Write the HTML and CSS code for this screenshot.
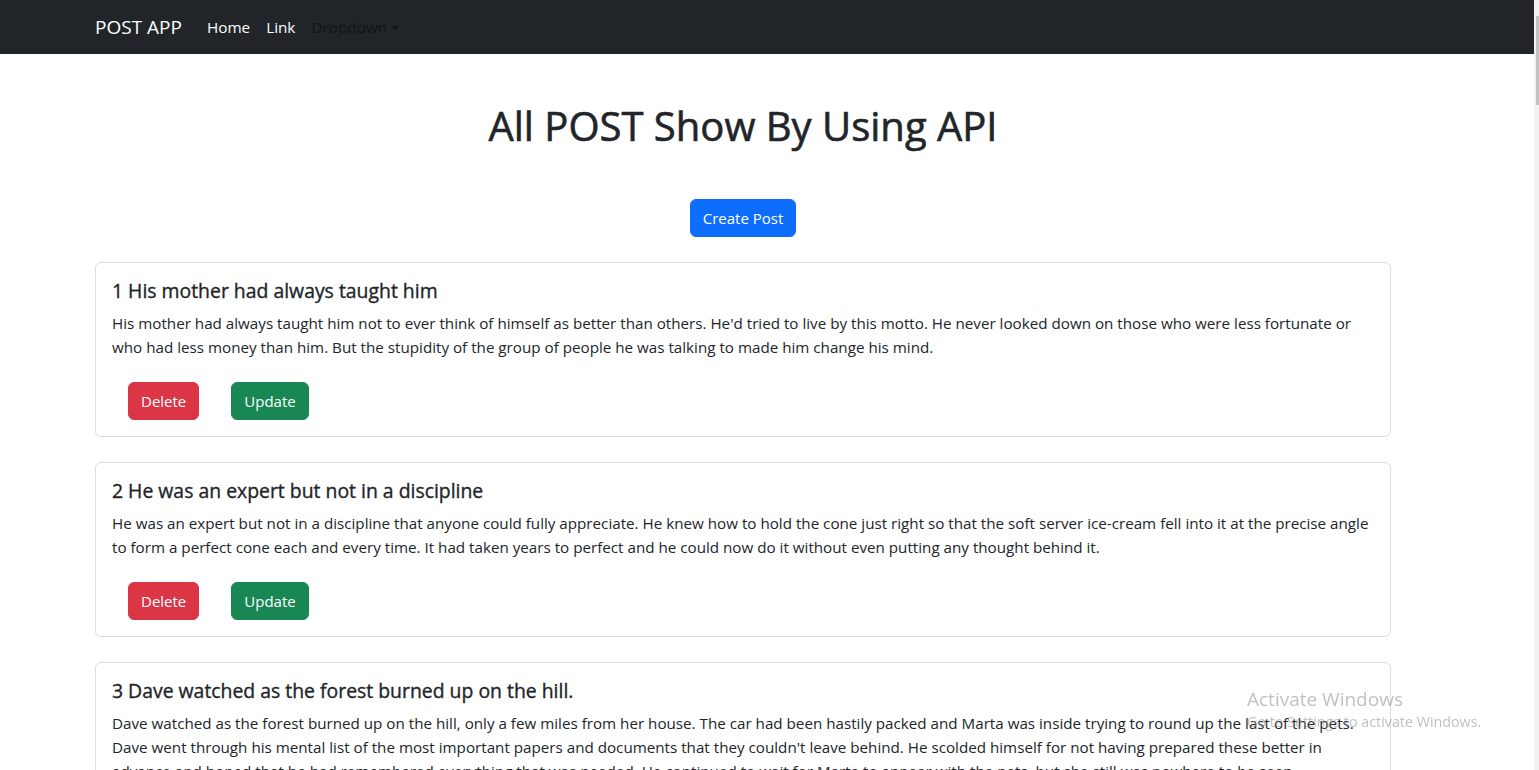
FILE: index.html
```html
<!DOCTYPE html>
<html lang="en">
<head>
<meta charset="utf-8">
<title>POST APP</title>
<link rel="stylesheet" href="styles.css">
</head>
<body>
<div class="page">
  <nav class="navbar">
    <div class="container nav-inner">
      <a class="brand" href="#">POST APP</a>
      <ul class="nav-links">
        <li><a class="nav-link active" href="#">Home</a></li>
        <li><a class="nav-link" href="#">Link</a></li>
        <li><a class="nav-link dropdown" href="#">Dropdown<span class="caret"></span></a></li>
      </ul>
    </div>
  </nav>

  <main class="container">
    <h1 class="page-title">All POST Show By Using API</h1>
    <div class="create-row">
      <button class="btn btn-primary">Create Post</button>
    </div>

    <div class="post-list">
      <div class="card">
        <h5 class="card-title">1 His mother had always taught him</h5>
        <p class="card-text">His mother had always taught him not to ever think of himself as better than others. He'd tried to live by this motto. He never looked down on those who were less fortunate or who had less money than him. But the stupidity of the group of people he was talking to made him change his mind.</p>
        <div class="actions">
          <button class="btn btn-danger">Delete</button>
          <button class="btn btn-success">Update</button>
        </div>
      </div>

      <div class="card">
        <h5 class="card-title">2 He was an expert but not in a discipline</h5>
        <p class="card-text">He was an expert but not in a discipline that anyone could fully appreciate. He knew how to hold the cone just right so that the soft server ice-cream fell into it at the precise angle to form a perfect cone each and every time. It had taken years to perfect and he could now do it without even putting any thought behind it.</p>
        <div class="actions">
          <button class="btn btn-danger">Delete</button>
          <button class="btn btn-success">Update</button>
        </div>
      </div>

      <div class="card">
        <h5 class="card-title">3 Dave watched as the forest burned up on the hill.</h5>
        <p class="card-text">Dave watched as the forest burned up on the hill, only a few miles from her house. The car had been hastily packed and Marta was inside trying to round up the last of the pets. Dave went through his mental list of the most important papers and documents that they couldn't leave behind. He scolded himself for not having prepared these better in advance and hoped that he had remembered everything that was needed. He continued to wait for Marta to appear with the pets, but she still was nowhere to be seen.</p>
        <div class="actions">
          <button class="btn btn-danger">Delete</button>
          <button class="btn btn-success">Update</button>
        </div>
      </div>
    </div>
  </main>
</div>

<div class="watermark">
  <div class="wm-title">Activate Windows</div>
  <div class="wm-sub">Go to Settings to activate Windows.</div>
</div>

<div class="scrollbar"><div class="scroll-thumb"></div></div>
</body>
</html>
```

FILE: styles.css
```css
html, body {
  margin: 0;
  padding: 0;
  overflow: hidden;
  background: #ffffff;
}

body {
  font-family: "Open Sans", "Noto Sans", "Liberation Sans", sans-serif;
  font-size: 15.2px;
  line-height: 24px;
  color: #212529;
}

.page {
  width: 1534px;
}

.container {
  width: 1296px;
  margin-left: 83px;
  padding: 0 12px;
}

/* Navbar */
.navbar {
  background: #212529;
  height: 54px;
}

.nav-inner {
  display: flex;
  align-items: center;
  height: 54px;
}

.brand {
  font-size: 19px;
  color: #ffffff;
  text-decoration: none;
  margin-right: 17px;
  line-height: 30px;
}

.nav-links {
  display: flex;
  list-style: none;
  margin: 0;
  padding: 0;
}

.nav-link {
  display: block;
  padding: 8px 8px;
  color: #ffffff;
  text-decoration: none;
  font-size: 15.3px;
}

.nav-link.dropdown {
  color: #121417;
}

.caret {
  display: inline-block;
  margin-left: 4px;
  vertical-align: 3px;
  border-top: 4.5px solid #121417;
  border-left: 4.5px solid transparent;
  border-right: 4.5px solid transparent;
}

/* Heading */
.page-title {
  margin: 48px 0 0;
  font-size: 40px;
  font-weight: 500;
  line-height: 48px;
  text-align: center;
  -webkit-text-stroke: 0.6px #212529;
}

.create-row {
  display: flex;
  justify-content: center;
  margin-top: 49px;
}

/* Buttons */
.btn {
  font-family: inherit;
  font-size: 15px;
  line-height: 24px;
  padding: 6px 12px;
  border: 1px solid transparent;
  border-radius: 6px;
  color: #ffffff;
  cursor: pointer;
}

.btn-primary {
  background: #0d6efd;
  border-color: #0d6efd;
}

.btn-danger {
  background: #dc3545;
  border-color: #dc3545;
}

.btn-success {
  background: #198754;
  border-color: #198754;
}

/* Posts */
.post-list {
  display: flex;
  flex-direction: column;
  gap: 25px;
  margin-top: 25px;
}

.card {
  border: 1px solid #dcdcdc;
  border-radius: 6px;
  padding: 16px;
}

.card-title {
  margin: 0 0 8px;
  font-size: 19.4px;
  font-weight: 500;
  line-height: 24px;
  -webkit-text-stroke: 0.35px #212529;
}

.card-text {
  margin: 0 0 16px;
}

.actions {
  display: flex;
  gap: 32px;
  padding: 7px 16px 0;
}

/* Overlays */
.watermark {
  position: fixed;
  left: 1247px;
  top: 686px;
  color: rgba(140, 140, 140, 0.55);
  font-family: "Open Sans", "Noto Sans", sans-serif;
}

.wm-title {
  font-size: 19px;
  line-height: 26px;
}

.wm-sub {
  font-size: 14.3px;
  line-height: 20px;
}

.scrollbar {
  position: fixed;
  top: 0;
  right: 0;
  width: 5px;
  height: 100%;
  background: #f1f1f1;
}

.scroll-thumb {
  margin: 16px 0 0 2px;
  width: 3px;
  height: 89px;
  background: #c1c1c1;
}
```
